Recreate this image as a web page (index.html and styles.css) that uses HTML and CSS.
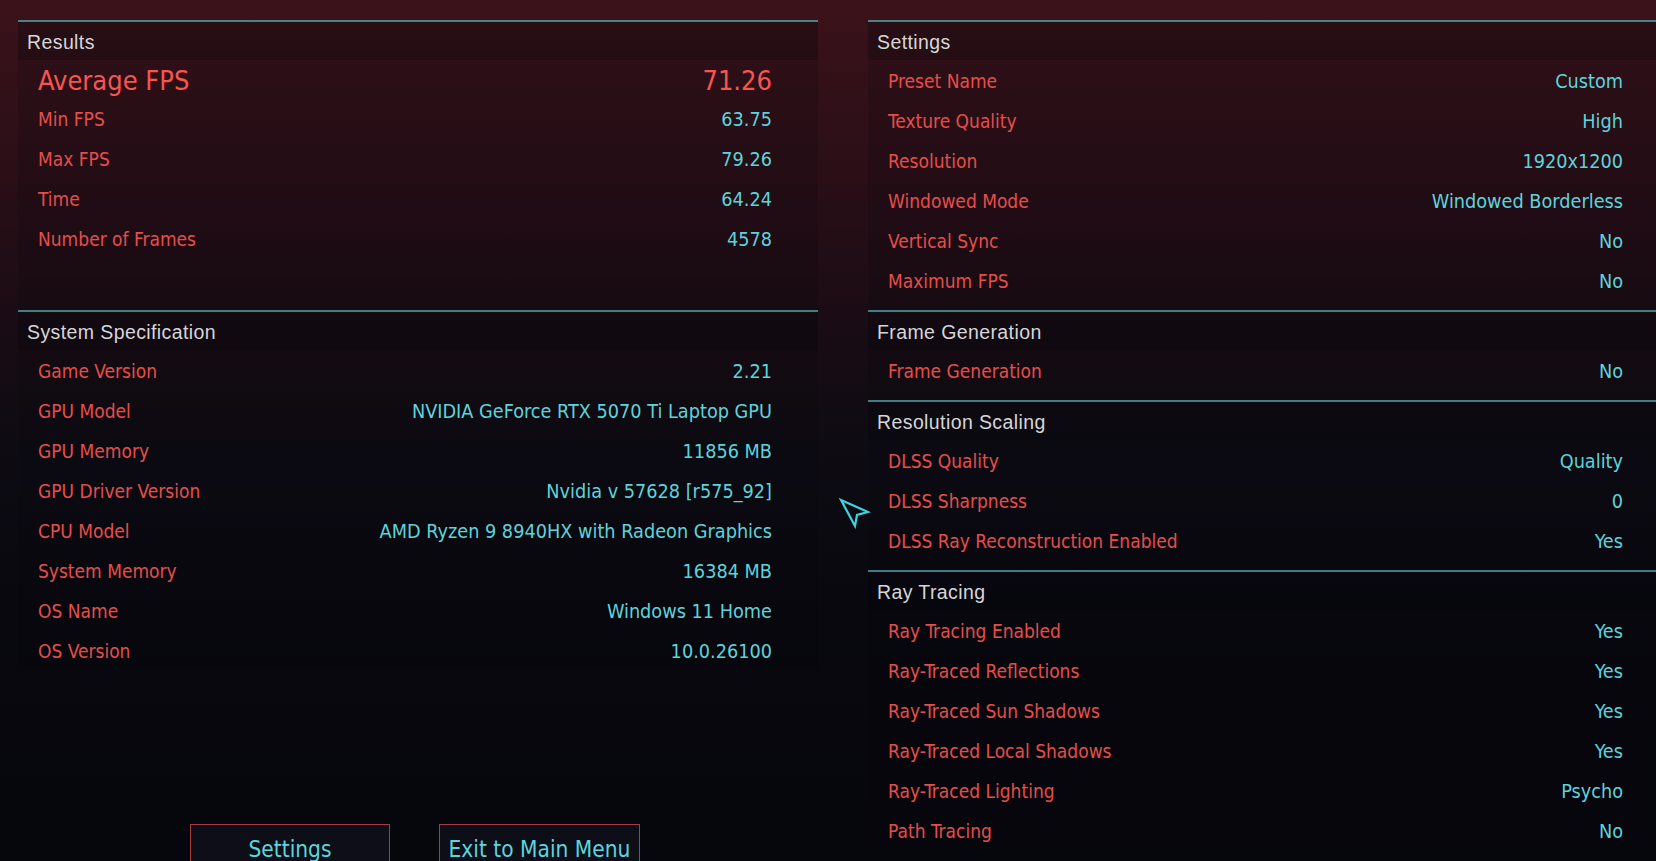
FILE: index.html
```html
<!DOCTYPE html>
<html lang="en">
<head>
<meta charset="utf-8">
<title>Benchmark Results</title>
<link rel="stylesheet" href="styles.css">
</head>
<body>
<div class="screen">
  <div class="col col-left">
    <section class="sec sec-results">
      <div class="sec-head">Results</div>
      <div class="row row-big"><span class="lbl">Average FPS</span><span class="val">71.26</span></div>
      <div class="row"><span class="lbl">Min FPS</span><span class="val">63.75</span></div>
      <div class="row"><span class="lbl">Max FPS</span><span class="val">79.26</span></div>
      <div class="row"><span class="lbl">Time</span><span class="val">64.24</span></div>
      <div class="row"><span class="lbl">Number of Frames</span><span class="val">4578</span></div>
    </section>
    <section class="sec">
      <div class="sec-head">System Specification</div>
      <div class="row"><span class="lbl">Game Version</span><span class="val">2.21</span></div>
      <div class="row"><span class="lbl">GPU Model</span><span class="val">NVIDIA GeForce RTX 5070 Ti Laptop GPU</span></div>
      <div class="row"><span class="lbl">GPU Memory</span><span class="val">11856 MB</span></div>
      <div class="row"><span class="lbl">GPU Driver Version</span><span class="val">Nvidia v 57628 [r575_92]</span></div>
      <div class="row"><span class="lbl">CPU Model</span><span class="val">AMD Ryzen 9 8940HX with Radeon Graphics</span></div>
      <div class="row"><span class="lbl">System Memory</span><span class="val">16384 MB</span></div>
      <div class="row"><span class="lbl">OS Name</span><span class="val">Windows 11 Home</span></div>
      <div class="row"><span class="lbl">OS Version</span><span class="val">10.0.26100</span></div>
    </section>
    <div class="buttons">
      <button class="btn">Settings</button>
      <button class="btn btn-exit">Exit to Main Menu</button>
    </div>
  </div>
  <div class="col col-right">
    <section class="sec sec-pad">
      <div class="sec-head">Settings</div>
      <div class="row"><span class="lbl">Preset Name</span><span class="val">Custom</span></div>
      <div class="row"><span class="lbl">Texture Quality</span><span class="val">High</span></div>
      <div class="row"><span class="lbl">Resolution</span><span class="val">1920x1200</span></div>
      <div class="row"><span class="lbl">Windowed Mode</span><span class="val">Windowed Borderless</span></div>
      <div class="row"><span class="lbl">Vertical Sync</span><span class="val">No</span></div>
      <div class="row"><span class="lbl">Maximum FPS</span><span class="val">No</span></div>
    </section>
    <section class="sec sec-pad">
      <div class="sec-head">Frame Generation</div>
      <div class="row"><span class="lbl">Frame Generation</span><span class="val">No</span></div>
    </section>
    <section class="sec sec-pad">
      <div class="sec-head">Resolution Scaling</div>
      <div class="row"><span class="lbl">DLSS Quality</span><span class="val">Quality</span></div>
      <div class="row"><span class="lbl">DLSS Sharpness</span><span class="val">0</span></div>
      <div class="row"><span class="lbl">DLSS Ray Reconstruction Enabled</span><span class="val">Yes</span></div>
    </section>
    <section class="sec">
      <div class="sec-head">Ray Tracing</div>
      <div class="row"><span class="lbl">Ray Tracing Enabled</span><span class="val">Yes</span></div>
      <div class="row"><span class="lbl">Ray-Traced Reflections</span><span class="val">Yes</span></div>
      <div class="row"><span class="lbl">Ray-Traced Sun Shadows</span><span class="val">Yes</span></div>
      <div class="row"><span class="lbl">Ray-Traced Local Shadows</span><span class="val">Yes</span></div>
      <div class="row"><span class="lbl">Ray-Traced Lighting</span><span class="val">Psycho</span></div>
      <div class="row"><span class="lbl">Path Tracing</span><span class="val">No</span></div>
    </section>
  </div>
  <svg class="cursor" width="32" height="32" viewBox="0 0 32 32" aria-hidden="true">
    <path d="M2 2 L29 14 L18 17 L16 28 Z" fill="none" stroke="#3fd3de" stroke-width="2.2" stroke-linejoin="miter"/>
  </svg>
</div>
</body>
</html>
```

FILE: styles.css
```css
html, body {
  margin: 0;
  padding: 0;
}

body {
  width: 1656px;
  height: 861px;
  overflow: hidden;
  background: linear-gradient(180deg, #3b121a 0%, #2c0f17 18%, #1b0c14 36%, #0e0b13 52%, #08080e 72%, #06070c 100%);
  font-family: "DejaVu Sans Condensed", "DejaVu Sans", sans-serif;
}

.screen {
  position: relative;
  display: flex;
  gap: 50px;
  padding-top: 20px;
  padding-left: 18px;
  height: 841px;
}

.col-left {
  width: 800px;
  flex: none;
}

.col-right {
  flex: 1;
}

.sec {
  border-top: 2px solid rgba(96, 196, 206, 0.62);
  background: rgba(6, 4, 12, 0.16);
}

.sec-results {
  height: 288px;
}

.sec-pad {
  padding-bottom: 10px;
}

.sec-head {
  height: 38px;
  line-height: 40px;
  padding-left: 9px;
  background: rgba(4, 4, 14, 0.2);
  color: #d6d6d8;
  font-family: "Liberation Sans", "Arial", sans-serif;
  font-size: 19.5px;
  letter-spacing: 0.4px;
}

.row {
  display: flex;
  justify-content: space-between;
  align-items: center;
  height: 40px;
  padding: 2px 46px 0 20px;
  box-sizing: border-box;
  font-size: 19px;
  white-space: nowrap;
}

.col-right .row {
  padding: 2px 33px 0 20px;
}

.lbl {
  color: #e54e4a;
}

.val {
  color: #5dd3dc;
  font-size: 19.7px;
}

.row-big {
  height: 38px;
  font-size: 27px;
}

.row-big .lbl,
.row-big .val {
  color: #f7554f;
  font-size: 27px;
}

.buttons {
  display: flex;
  gap: 49px;
  margin-top: 154px;
  padding-left: 172px;
}

.btn {
  width: 200px;
  height: 48px;
  padding: 2px 0 0;
  border: 1px solid #a63e3e;
  background: #0d0e18;
  color: #5bd5de;
  font-family: "DejaVu Sans Condensed", "DejaVu Sans", sans-serif;
  font-size: 22.5px;
  line-height: 44px;
  text-align: center;
  white-space: nowrap;
}

.btn-exit {
  width: 201px;
}

.cursor {
  position: absolute;
  left: 839px;
  top: 498px;
}
```
